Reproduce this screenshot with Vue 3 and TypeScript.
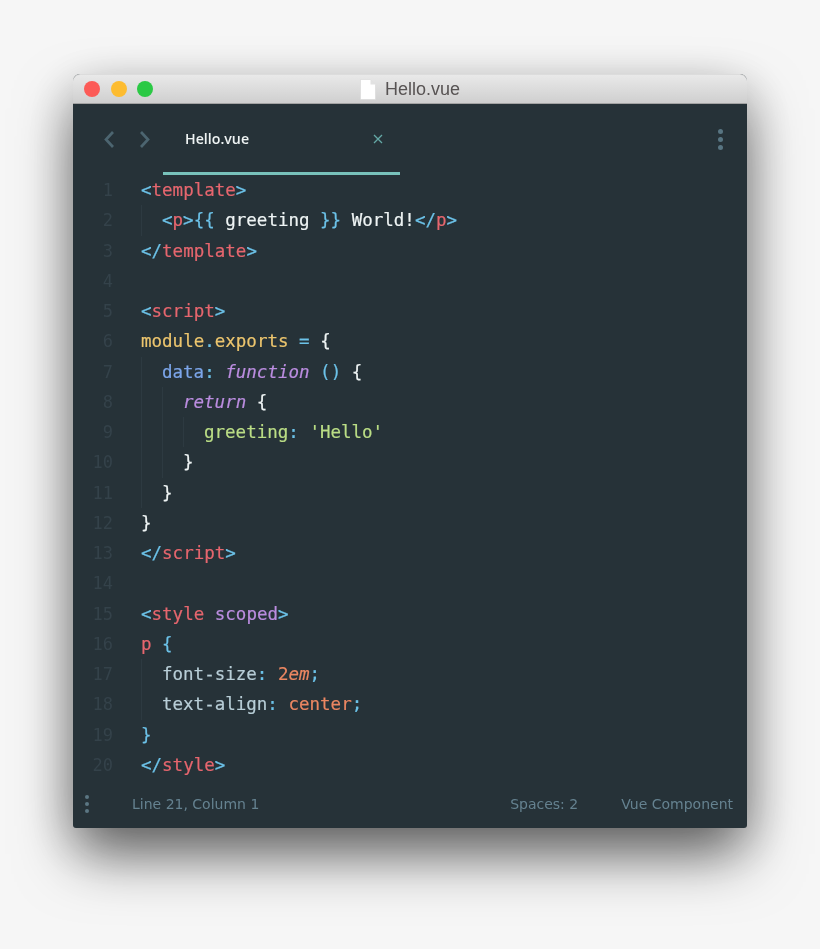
<script setup lang="ts">
type Tok = [string, string]
interface Line { ind: number; toks: Tok[] }

const lines: Line[] = [
  { ind: 0, toks: [['<', 'pu'], ['template', 're'], ['>', 'pu']] },
  { ind: 1, toks: [['<', 'pu'], ['p', 're'], ['>', 'pu'], ['{{', 'pu'], [' greeting ', 'tx'], ['}}', 'pu'], [' World!', 'tx'], ['</', 'pu'], ['p', 're'], ['>', 'pu']] },
  { ind: 0, toks: [['</', 'pu'], ['template', 're'], ['>', 'pu']] },
  { ind: 0, toks: [] },
  { ind: 0, toks: [['<', 'pu'], ['script', 're'], ['>', 'pu']] },
  { ind: 0, toks: [['module', 'ye'], ['.', 'pu'], ['exports', 'ye'], [' ', 'tx'], ['=', 'pu'], [' {', 'tx']] },
  { ind: 1, toks: [['data', 'bl'], [':', 'pu'], [' ', 'tx'], ['function', 'pi'], [' ', 'tx'], ['()', 'pu'], [' {', 'tx']] },
  { ind: 2, toks: [['return', 'pi'], [' {', 'tx']] },
  { ind: 3, toks: [['greeting', 'gr'], [':', 'pu'], [' ', 'tx'], ["'Hello'", 'gr']] },
  { ind: 2, toks: [['}', 'tx']] },
  { ind: 1, toks: [['}', 'tx']] },
  { ind: 0, toks: [['}', 'tx']] },
  { ind: 0, toks: [['</', 'pu'], ['script', 're'], ['>', 'pu']] },
  { ind: 0, toks: [] },
  { ind: 0, toks: [['<', 'pu'], ['style', 're'], [' ', 'tx'], ['scoped', 'pu2'], ['>', 'pu']] },
  { ind: 0, toks: [['p', 're'], [' ', 'tx'], ['{', 'pu']] },
  { ind: 1, toks: [['font-size', 'pr'], [':', 'pu'], [' ', 'tx'], ['2', 'or'], ['em', 'ori'], [';', 'pu']] },
  { ind: 1, toks: [['text-align', 'pr'], [':', 'pu'], [' ', 'tx'], ['center', 'or'], [';', 'pu']] },
  { ind: 0, toks: [['}', 'pu']] },
  { ind: 0, toks: [['</', 'pu'], ['style', 're'], ['>', 'pu']] },
]
</script>

<template>
  <div class="page">
    <div class="window">
      <header class="titlebar">
        <div class="lights">
          <span class="light red"></span>
          <span class="light yellow"></span>
          <span class="light green"></span>
        </div>
        <svg class="doc" width="16" height="21" viewBox="0 0 16 21">
          <path d="M0.5 0.5H10.5L15.5 5.5V20.5H0.5Z" fill="#fff" stroke="#d6d6d6" stroke-width="0.6" />
          <path d="M10.5 0.5V5.5H15.5Z" fill="#e2e2e2" />
        </svg>
        <span class="title">Hello.vue</span>
      </header>

      <nav class="tabbar">
        <svg class="chev" width="12" height="19" viewBox="0 0 12 19">
          <path d="M10 2L3 9.5L10 17" fill="none" stroke="#4c6570" stroke-width="2.7" />
        </svg>
        <svg class="chev second" width="12" height="19" viewBox="0 0 12 19">
          <path d="M2 2L9 9.5L2 17" fill="none" stroke="#4c6570" stroke-width="2.7" />
        </svg>
        <div class="tab">
          <span class="tabname">Hello.vue</span>
          <svg class="close" width="10" height="10" viewBox="0 0 10 10">
            <path d="M1 1L9 9M9 1L1 9" fill="none" stroke="#64a8a6" stroke-width="1.3" />
          </svg>
        </div>
        <div class="kebab top"><i></i><i></i><i></i></div>
      </nav>

      <main class="code">
        <div v-for="(line, i) in lines" :key="i" class="line">
          <span class="num">{{ i + 1 }}</span>
          <span class="src">
            <span v-for="g in line.ind" :key="g" class="guide"></span>
            <span v-for="(t, j) in line.toks" :key="j" :class="t[1]">{{ t[0] }}</span>
          </span>
        </div>
      </main>

      <footer class="status">
        <div class="kebab small"><i></i><i></i><i></i></div>
        <span class="pos">Line 21, Column 1</span>
        <span class="spaces">Spaces: 2</span>
        <span class="lang">Vue Component</span>
      </footer>
    </div>
  </div>
</template>

<style>
html, body { margin: 0; background: #f6f6f6; }
</style>

<style scoped>
.page {
  height: 949px;
  box-sizing: border-box;
  padding: 74px 73px 0;
  background: #f6f6f6;
  overflow: hidden;
}
.window {
  width: 674px;
  height: 754px;
  border-radius: 7px 7px 3px 3px;
  display: flex;
  flex-direction: column;
  background: #263238;
  box-shadow: 0 30px 60px -4px rgba(0, 0, 0, 0.55), 0 14px 50px rgba(0, 0, 0, 0.22);
  filter: blur(0.4px);
}
.titlebar {
  height: 30px;
  box-sizing: border-box;
  display: flex;
  align-items: center;
  justify-content: center;
  position: relative;
  border-radius: 7px 7px 0 0;
  background: linear-gradient(#e9e9e9, #cfcfcf);
  border-top: 1px solid #dcdcdc;
  border-bottom: 1px solid #a3a3a3;
}
.lights {
  position: absolute;
  left: 11px;
  top: 6px;
  display: flex;
  gap: 10.5px;
}
.light { width: 16px; height: 16px; border-radius: 50%; }
.red { background: #fc5b57; }
.yellow { background: #fdbc30; }
.green { background: #2bc945; }
.doc { margin-right: 9px; }
.title {
  font: 18px "Liberation Sans", Arial, sans-serif;
  color: #575353;
  padding-top: 1px;
}
.tabbar {
  height: 71px;
  flex: none;
  display: flex;
  padding-left: 30px;
}
.chev { margin-top: 26px; }
.second { margin-left: 24px; }
.tab {
  width: 237px;
  height: 71px;
  box-sizing: border-box;
  margin-left: 12px;
  padding: 26px 17px 0 22px;
  border-bottom: 3px solid #78c2bb;
  display: flex;
  justify-content: space-between;
}
.tabname {
  font: 600 14.2px/17px "Open Sans", sans-serif;
  color: #eef3f3;
}
.close { margin-top: 4px; }
.kebab { display: flex; flex-direction: column; align-items: center; }
.kebab i { display: block; border-radius: 50%; background: #587582; }
.kebab.top { margin-left: auto; margin-right: 24px; margin-top: 25px; gap: 3px; }
.kebab.top i { width: 5px; height: 5px; }
.kebab.small { gap: 3px; width: 6px; }
.kebab.small i { width: 4px; height: 4px; background: #5c7783; }

.code { flex: none; }
.line {
  display: flex;
  height: 30.25px;
  font: 17.5px/30.25px "DejaVu Sans Mono", monospace;
  white-space: pre;
  -webkit-text-stroke: 0.2px;
}
.num {
  width: 40px;
  flex: none;
  text-align: right;
  color: #34424a;
  font-size: 17px;
  -webkit-text-stroke: 0;
}
.src {
  margin-left: 28px;
  display: block;
}
.guide {
  display: inline-block;
  width: 21px;
  height: 30.25px;
  box-sizing: border-box;
  border-left: 1px solid #2d3a41;
  vertical-align: top;
}
.pu { color: #6cc2e8; }
.pu2 { color: #bb8de0; }
.re { color: #e6666e; }
.tx { color: #eef4f4; }
.ye { color: #ecc56e; }
.bl { color: #7ca6ea; }
.pi { color: #bb8de0; font-style: italic; }
.gr { color: #bbde86; }
.pr { color: #b8ced7; }
.or { color: #ec8762; }
.ori { color: #ec8762; font-style: italic; }

.status {
  flex: 1;
  display: flex;
  align-items: center;
  padding: 0 14px 0 11px;
  font: 14px "DejaVu Sans", sans-serif;
  color: #658290;
}
.pos { margin-left: 42px; }
.spaces { margin-left: auto; }
.lang { margin-left: 43px; }
</style>
